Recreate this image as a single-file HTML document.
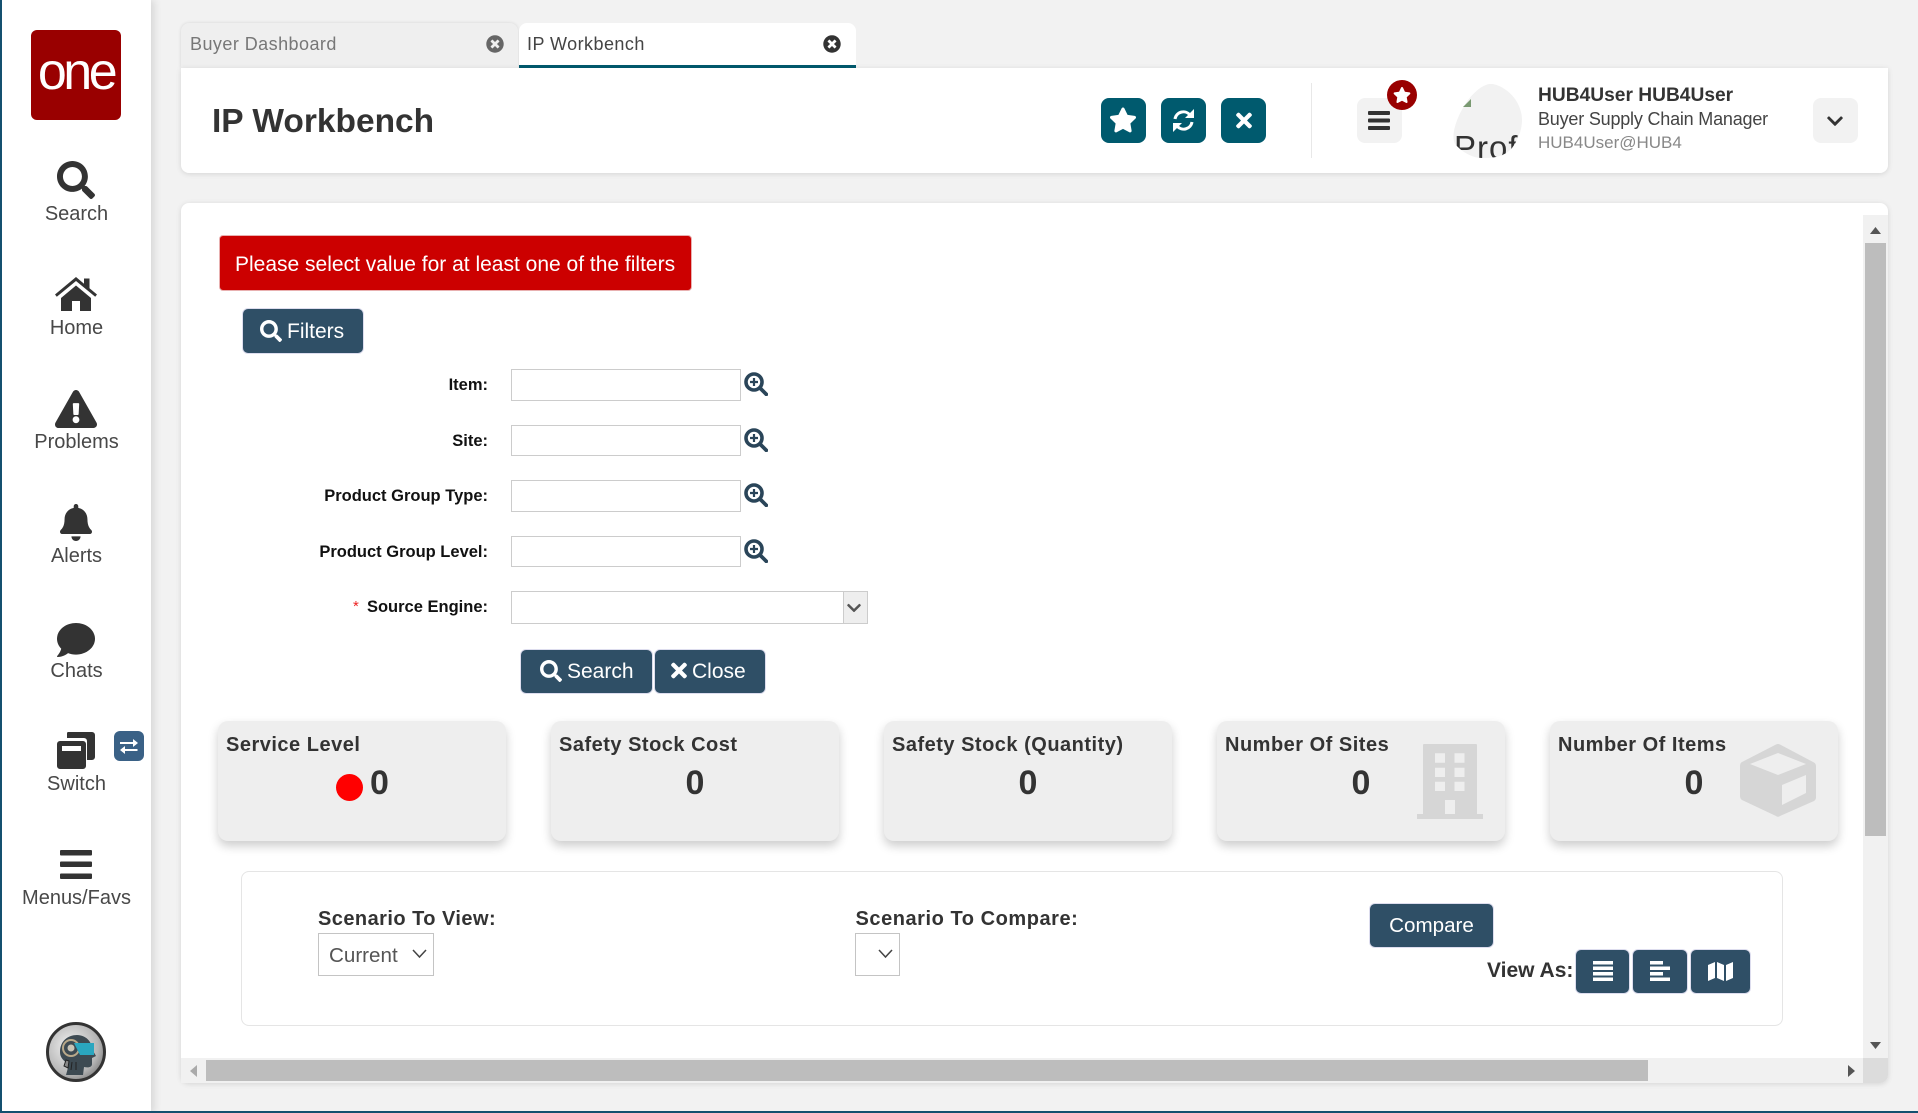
<!DOCTYPE html>
<html lang="en"><head><meta charset="utf-8"><title>IP Workbench</title>
<style>
*{box-sizing:border-box}
html,body{margin:0;padding:0;width:1918px;height:1113px;overflow:hidden;background:#f2f2f2;font-family:"Liberation Sans",sans-serif;color:#333}
.a{position:absolute}
.t{position:absolute;white-space:nowrap}
svg{position:absolute;display:block}
.nav{position:absolute;left:2px;width:149px;text-align:center;font-size:20px;color:#484848;line-height:24px}
.btn{position:absolute;background:#2f4f66;border:1px solid #dde;border-radius:6px;color:#fff;font-size:20px}
.tb{position:absolute;top:98px;width:45px;height:45px;border-radius:8px;background:#005a6e}
.inp{position:absolute;left:511px;width:230px;background:#fff;border:1px solid #ccc}
.lab{position:absolute;right:1430px;font-weight:bold;font-size:16.500px;color:#111;line-height:20px;white-space:nowrap}
.card{position:absolute;top:721px;width:288px;height:120px;background:#eee;border-radius:10px;box-shadow:0 5px 10px rgba(0,0,0,.2)}
.ct{position:absolute;left:8px;top:12px;font-size:20px;font-weight:bold;line-height:24px;color:#333;white-space:nowrap;letter-spacing:.5px}
.cv{position:absolute;left:0;width:100%;text-align:center;top:42px;font-size:34px;font-weight:bold;line-height:40px;color:#333}
</style></head><body>
<svg width="0" height="0" style="position:absolute"><defs>
<symbol id="s" viewBox="0 0 512 512"><path d="M505 442.7L405.3 343c-4.5-4.5-10.6-7-17-7H372c27.6-35.3 44-79.7 44-128C416 93.1 322.9 0 208 0S0 93.1 0 208s93.1 208 208 208c48.3 0 92.7-16.4 128-44v16.3c0 6.4 2.5 12.5 7 17l99.7 99.7c9.4 9.4 24.6 9.4 33.9 0l28.3-28.3c9.4-9.4 9.4-24.6.1-34zM208 336c-70.7 0-128-57.2-128-128 0-70.7 57.2-128 128-128 70.7 0 128 57.2 128 128 0 70.7-57.2 128-128 128z"/></symbol>
<symbol id="x" viewBox="0 0 352 512"><path d="M242.72 256l100.07-100.07c12.28-12.28 12.28-32.19 0-44.48l-22.24-22.24c-12.28-12.28-32.19-12.28-44.48 0L176 189.28 75.93 89.21c-12.28-12.28-32.19-12.28-44.48 0L9.21 111.45c-12.28 12.28-12.28 32.19 0 44.48L109.28 256 9.21 356.07c-12.28 12.28-12.28 32.19 0 44.48l22.24 22.24c12.28 12.28 32.2 12.28 44.48 0L176 322.72l100.07 100.07c12.28 12.28 32.2 12.28 44.48 0l22.24-22.24c12.28-12.28 12.28-32.19 0-44.48L242.72 256z"/></symbol>
<symbol id="st" viewBox="0 0 576 512"><path d="M259.3 17.8L194 150.2 47.9 171.5c-26.2 3.8-36.7 36.1-17.7 54.6l105.7 103-25 145.5c-4.5 26.3 23.2 46 46.4 33.7L288 439.6l130.7 68.7c23.2 12.2 50.9-7.4 46.4-33.7l-25-145.5 105.7-103c19-18.5 8.5-50.8-17.7-54.6L382 150.2 316.7 17.8c-11.7-23.6-45.6-23.9-57.4 0z"/></symbol>
<symbol id="tc" viewBox="0 0 512 512"><path d="M256 8C119 8 8 119 8 256s111 248 248 248 248-111 248-248S393 8 256 8zm121.6 313.1c4.7 4.7 4.7 12.3 0 17L338 377.6c-4.7 4.7-12.3 4.7-17 0L256 312l-65.1 65.6c-4.7 4.7-12.3 4.7-17 0L134.4 338c-4.7-4.7-4.7-12.3 0-17l65.6-65-65.6-65.1c-4.7-4.7-4.7-12.3 0-17l39.6-39.6c4.7-4.7 12.3-4.7 17 0l65 65.7 65.1-65.6c4.7-4.7 12.3-4.7 17 0l39.6 39.6c4.7 4.7 4.7 12.3 0 17L312 256l65.6 65.1z"/></symbol>
<symbol id="sp" viewBox="0 0 24 24"><circle cx="10" cy="10" r="8" fill="none" stroke="#2a4559" stroke-width="3.600"/><path d="M16 16l6.300 6.300" stroke="#2a4559" stroke-width="3.800" stroke-linecap="round"/><path d="M10 6v8M6 10h8" stroke="#2a4559" stroke-width="2.200"/></symbol>
</defs></svg>

<!-- sidebar -->
<div class="a" style="left:0;top:0;width:151px;height:1113px;background:#fff;box-shadow:3px 0 8px rgba(0,0,0,.12)"></div>
<div class="a" style="left:0;top:0;width:2px;height:1113px;background:#14506f"></div>
<div class="a" style="left:31px;top:30px;width:90px;height:90px;background:#990000;border-radius:6px"></div>
<div class="t" style="left:31px;top:30px;width:90px;height:90px;line-height:84px;text-align:center;color:#fff;font-size:52px;letter-spacing:-3.500px">one</div>

<svg style="left:57px;top:161px" width="38" height="38" fill="#333"><use href="#s"/></svg>
<div class="nav" style="top:202px">Search</div>
<svg style="left:55px;top:277px" width="42" height="34" viewBox="0 0 42 34" fill="#333"><path d="M21 0L0 17.500l1.800 2.300L21 4l19.200 15.800 1.800-2.300-7.500-6.200V1.500h-5.500v5.300zM6 21v13h11V24h8v10h11V21L21 8.500z"/></svg>
<div class="nav" style="top:316px">Home</div>
<svg style="left:55px;top:390px" width="42" height="38" viewBox="0 0 576 512" preserveAspectRatio="none" fill="#333"><path d="M569.517 440.013C587.975 472.007 564.806 512 527.94 512H48.054c-36.937 0-59.999-40.055-41.577-71.987L246.423 24.028c18.467-32.009 64.72-31.951 83.154 0l239.94 415.985zM288 354c-25.405 0-46 20.595-46 46s20.595 46 46 46 46-20.595 46-46-20.595-46-46-46zm-43.673-165.346l7.418 136c.347 6.364 5.609 11.346 11.982 11.346h48.546c6.373 0 11.635-4.982 11.982-11.346l7.418-136c.375-6.874-5.098-12.654-11.982-12.654h-63.383c-6.884 0-12.356 5.78-11.981 12.654z"/></svg>
<div class="nav" style="top:430px">Problems</div>
<svg style="left:60px;top:504px" width="32" height="37" viewBox="0 0 448 512" preserveAspectRatio="none" fill="#333"><path d="M224 512c35.32 0 63.97-28.65 63.97-64H160.03c0 35.35 28.65 64 63.97 64zm215.39-149.71c-19.32-20.76-55.47-51.99-55.47-154.29 0-77.7-54.48-139.9-127.94-155.16V32c0-17.67-14.32-32-31.98-32s-31.98 14.33-31.98 32v20.84C118.56 68.1 64.08 130.3 64.08 208c0 102.3-36.15 133.53-55.47 154.29-6 6.45-8.66 14.16-8.61 21.71.11 16.4 12.98 32 32.1 32h383.8c19.12 0 32-15.6 32.1-32 .05-7.55-2.61-15.27-8.61-21.71z"/></svg>
<div class="nav" style="top:544px">Alerts</div>
<svg style="left:57px;top:623px" width="38" height="34" viewBox="0 0 512 448" preserveAspectRatio="none" fill="#333"><path d="M256 0C114.6 0 0 93.100 0 208c0 49.600 21.400 95 57 130.700C44.500 389.100 2.700 434 2.200 434.500c-2.200 2.300-2.800 5.700-1.500 8.700S4.800 448 8 448c66.300 0 116-31.800 140.600-51.400 32.700 12.300 69 19.400 107.400 19.400 141.400 0 256-93.100 256-208S397.400 0 256 0z"/></svg>
<div class="nav" style="top:658.500px">Chats</div>
<svg style="left:57px;top:732px" width="38" height="37" viewBox="0 0 38 37" fill="#333"><path d="M11 0h24a3 3 0 0 1 3 3v22a3 3 0 0 1-3 3h-5V9a3 3 0 0 0-3-3H10V1.500C10 .5 10.500 0 11 0z"/><path d="M3 9h23a3 3 0 0 1 3 3v22a3 3 0 0 1-3 3H3a3 3 0 0 1-3-3V12a3 3 0 0 1 3-3zm2 5v5h19v-5z" fill-rule="evenodd"/></svg>
<div class="a" style="left:114px;top:731px;width:30px;height:30px;background:#3a6186;border-radius:6px"></div>
<svg style="left:120px;top:739px" width="18" height="15" viewBox="0 0 18 15" fill="none" stroke="#fff" stroke-width="2"><path d="M0 4h15M17.500 11H3"/><path d="M13 0l5 4-5 4zM5 7l-5 4 5 4z" fill="#fff" stroke="none"/></svg>
<div class="nav" style="top:772px">Switch</div>
<svg style="left:60px;top:850px" width="32" height="29" fill="#333"><rect width="32" height="5.500" rx="1"/><rect y="11.500" width="32" height="5.500" rx="1"/><rect y="23.500" width="32" height="5.500" rx="1"/></svg>
<div class="nav" style="top:886px">Menus/Favs</div>
<svg style="left:46px;top:1022px" width="60" height="60" viewBox="0 0 60 60">
<defs><radialGradient id="g" cx=".4" cy=".4" r=".7"><stop offset="0" stop-color="#f2f2f2"/><stop offset=".7" stop-color="#b5b5b5"/><stop offset="1" stop-color="#777"/></radialGradient></defs>
<circle cx="30" cy="30" r="28.500" fill="url(#g)" stroke="#333" stroke-width="3"/>
<path d="M14 30c0-11 8-17 17-17 9 0 15 7 15 14l4 7-4 2v6c0 3-3 4-8 3l-1 8H20l3-11c-6-3-9-7-9-12z" fill="#3d4a52"/>
<circle cx="25" cy="26" r="8" fill="none" stroke="#b9a98a" stroke-width="2"/><circle cx="25" cy="26" r="3.500" fill="#c9c4b6"/>
<path d="M28 21h20v12H34z" fill="#2aa6bf"/><path d="M18 44l2-6 3 1-1 7zM26 40l-1 8M30 40v8" stroke="#222" fill="#888"/>
</svg>

<!-- tabs -->
<div class="a" style="left:181px;top:23px;width:337px;height:45px;background:#efefef;border-radius:8px 8px 0 0;box-shadow:0 0 3px rgba(0,0,0,.12)"></div>
<div class="t" style="left:190px;top:32px;font-size:18px;line-height:24px;color:#777;letter-spacing:.45px">Buyer Dashboard</div>
<svg style="left:486px;top:35px" width="18" height="18" fill="#666"><use href="#tc"/></svg>
<div class="a" style="left:519px;top:23px;width:337px;height:45px;background:#fff;border-radius:8px 8px 0 0;border-bottom:3px solid #005a6e"></div>
<div class="t" style="left:527px;top:32px;font-size:18px;line-height:24px;color:#444;letter-spacing:.45px">IP Workbench</div>
<svg style="left:823px;top:35px" width="18" height="18" fill="#333"><use href="#tc"/></svg>

<!-- header -->
<div class="a" style="left:181px;top:68px;width:1707px;height:105px;background:#fff;border-radius:0 0 8px 8px;box-shadow:0 1px 6px rgba(0,0,0,.12)"></div>
<div class="t" style="left:212px;top:101px;font-size:33.500px;font-weight:bold;line-height:42px;color:#333">IP Workbench</div>
<div class="tb" style="left:1101px"></div><svg style="left:1109px;top:107px" width="28" height="26" fill="#fff"><use href="#st"/></svg>
<div class="tb" style="left:1161px"></div><svg style="left:1171px;top:108px" width="25" height="25" viewBox="0 0 25 25"><g fill="none" stroke="#fff" stroke-width="3"><path d="M4 11a8.500 8.500 0 0 1 15-4"/><path d="M21 14a8.500 8.500 0 0 1-15 4"/></g><path d="M23 1v9h-9zM2 24v-9h9z" fill="#fff"/></svg>
<div class="tb" style="left:1221px"></div><svg style="left:1235.500px;top:109px" width="16" height="23" fill="#fff"><use href="#x"/></svg>
<div class="a" style="left:1311px;top:83px;width:1px;height:75px;background:#e8e8e8"></div>
<div class="a" style="left:1357px;top:98px;width:45px;height:45px;border-radius:8px;background:#f2f2f2"></div>
<svg style="left:1368px;top:111px" width="22" height="19" fill="#333"><rect width="22" height="4" rx="1"/><rect y="7.500" width="22" height="4" rx="1"/><rect y="15" width="22" height="4" rx="1"/></svg>
<div class="a" style="left:1387px;top:80px;width:30px;height:30px;border-radius:50%;background:#990000"></div>
<svg style="left:1393px;top:87px" width="18" height="16" fill="#fff"><use href="#st"/></svg>
<div class="a" style="left:1452px;top:84px;width:70px;height:74px;overflow:hidden;background:#f2f2f2;clip-path:path('M41 0C58 4 70 20 70 36C70 46 66 56 60 64C52 73 42 74 30 74C20 74 10 68 3 60C-2 50 6 30 16 16C24 6 33 -1 41 0Z')"><div class="t" style="left:2px;top:45.500px;font-size:33px;line-height:36px;color:#333;letter-spacing:1px">Prof</div></div>
<svg style="left:1463px;top:99px" width="9" height="9"><path d="M8 0v8H0z" fill="#7a9a72"/></svg>
<div class="t" style="left:1538px;top:84px;font-size:19.200px;font-weight:bold;line-height:24px;color:#333">HUB4User HUB4User</div>
<div class="t" style="left:1538px;top:107px;font-size:18px;line-height:24px;color:#444;letter-spacing:-.2px">Buyer Supply Chain Manager</div>
<div class="t" style="left:1538px;top:131px;font-size:17px;line-height:24px;color:#888">HUB4User@HUB4</div>
<div class="a" style="left:1813px;top:98px;width:45px;height:45px;border-radius:8px;background:#f2f2f2"></div>
<svg style="left:1827px;top:112px" width="16" height="16" viewBox="0 0 448 448" fill="#333"><path d="M207.029 381.476L12.686 187.132c-9.373-9.373-9.373-24.569 0-33.941l22.667-22.667c9.357-9.357 24.522-9.375 33.901-.04L224 284.505l154.745-154.021c9.379-9.335 24.544-9.317 33.901.04l22.667 22.667c9.373 9.373 9.373 24.569 0 33.941L240.971 381.476c-9.373 9.372-24.569 9.372-33.942 0z"/></svg>

<!-- main card -->
<div class="a" style="left:181px;top:203px;width:1707px;height:880px;background:#fff;border-radius:8px;box-shadow:0 1px 6px rgba(0,0,0,.12)"></div>

<div class="a" style="left:219px;top:235px;width:473px;height:56px;background:#cc0000;border:1px solid #e8b0b0;border-radius:4px"></div>
<div class="t" style="left:235px;top:252.500px;font-size:21px;line-height:24px;color:#fff">Please select value for at least one of the filters</div>

<div class="btn" style="left:241.500px;top:308px;width:122.500px;height:46px"></div>
<svg style="left:260px;top:320px" width="22" height="22" fill="#fff"><use href="#s"/></svg>
<div class="t" style="left:287px;top:319.500px;font-size:21px;line-height:24px;color:#fff">Filters</div>

<div class="lab" style="top:375px;right:1430px">Item:</div>
<div class="inp" style="top:369px;height:32px"></div><svg style="left:744px;top:372px" width="24" height="24"><use href="#sp"/></svg>
<div class="lab" style="top:431px">Site:</div>
<div class="inp" style="top:425px;height:31px"></div><svg style="left:744px;top:428px" width="24" height="24"><use href="#sp"/></svg>
<div class="lab" style="top:486px">Product Group Type:</div>
<div class="inp" style="top:480px;height:32px"></div><svg style="left:744px;top:483px" width="24" height="24"><use href="#sp"/></svg>
<div class="lab" style="top:542px">Product Group Level:</div>
<div class="inp" style="top:536px;height:31px"></div><svg style="left:744px;top:539px" width="24" height="24"><use href="#sp"/></svg>
<div class="lab" style="top:597px">Source Engine:</div>
<div class="t" style="left:353px;top:597px;font-size:15px;line-height:20px;color:#e22">*</div>
<div class="inp" style="top:591px;height:33px;width:357px"></div>
<div class="a" style="left:843px;top:591px;width:25px;height:33px;background:#eee;border:1px solid #ccc"></div>
<svg style="left:847px;top:600px" width="14" height="14" viewBox="0 0 448 448" fill="#555"><path d="M207.029 381.476L12.686 187.132c-9.373-9.373-9.373-24.569 0-33.941l22.667-22.667c9.357-9.357 24.522-9.375 33.901-.04L224 284.505l154.745-154.021c9.379-9.335 24.544-9.317 33.901.04l22.667 22.667c9.373 9.373 9.373 24.569 0 33.941L240.971 381.476c-9.373 9.372-24.569 9.372-33.942 0z"/></svg>

<div class="btn" style="left:520px;top:649px;width:133px;height:45px"></div>
<svg style="left:540px;top:660px" width="22" height="22" fill="#fff"><use href="#s"/></svg>
<div class="t" style="left:567px;top:659.500px;font-size:21px;line-height:24px;color:#fff">Search</div>
<div class="btn" style="left:653.500px;top:649px;width:112.500px;height:45px"></div>
<svg style="left:671px;top:659px" width="16" height="23" fill="#fff"><use href="#x"/></svg>
<div class="t" style="left:692px;top:659.500px;font-size:21px;line-height:24px;color:#fff">Close</div>

<!-- KPI cards -->
<div class="card" style="left:218px"><div class="ct">Service Level</div>
<div class="a" style="left:118px;top:53px;width:27px;height:27px;border-radius:50%;background:#f00"></div>
<div class="t" style="left:152px;top:42px;font-size:34px;font-weight:bold;line-height:40px;color:#333">0</div></div>
<div class="card" style="left:551px"><div class="ct">Safety Stock Cost</div><div class="cv">0</div></div>
<div class="card" style="left:884px"><div class="ct">Safety Stock (Quantity)</div><div class="cv">0</div></div>
<div class="card" style="left:1217px"><div class="ct">Number Of Sites</div><div class="cv">0</div>
<svg style="left:200px;top:23px" width="66" height="75" viewBox="0 0 66 75" fill="#d6d6d6"><path fill-rule="evenodd" d="M6 1a1 1 0 0 1 1-1h52a1 1 0 0 1 1 1v69h6v5H0v-5h6zM18 9.300v9.400h10V9.300zM37.500 9.300v9.400h10V9.300zM18 23.700V33h10v-9.300zM37.500 23.700V33h10v-9.300zM18 37.700V47h10v-9.300zM37.500 37.700V47h10v-9.300zM28 56v14h10V56z"/></svg></div>
<div class="card" style="left:1550px"><div class="ct">Number Of Items</div><div class="cv">0</div>
<svg style="left:190px;top:23px" width="76" height="73" viewBox="0 0 76 73" fill="#d6d6d6"><path fill-rule="evenodd" d="M36 .5q2-1 4 0l34 18q2 1 2 4v31q0 2-2 3.500L40 72q-2 1.500-4 0L2 56q-2-1.500-2-4V22q0-3 2-4zM38 9L10 20l28 11 28-11zM66 31L42 41v20l24-12z"/></svg></div>

<!-- scenario panel -->
<div class="a" style="left:241px;top:871px;width:1542px;height:155px;background:#fff;border:1px solid #e5e5e5;border-radius:8px"></div>
<div class="t" style="left:318px;top:907px;font-size:20px;font-weight:bold;line-height:24px;color:#333;letter-spacing:.45px">Scenario To View:</div>
<div class="a" style="left:318px;top:933px;width:116px;height:43px;border:1px solid #c4c4c4;background:#fff"></div>
<div class="t" style="left:329px;top:943.500px;font-size:20.600px;line-height:24px;color:#555">Current</div>
<svg style="left:412px;top:949px" width="15" height="10" fill="none" stroke="#444" stroke-width="1.500"><path d="M1 1l6.500 7L14 1"/></svg>
<div class="t" style="left:855.500px;top:907px;font-size:20px;font-weight:bold;line-height:24px;color:#333;letter-spacing:.55px">Scenario To Compare:</div>
<div class="a" style="left:855px;top:933px;width:45px;height:43px;border:1px solid #c4c4c4;background:#fff"></div>
<svg style="left:878px;top:949px" width="15" height="10" fill="none" stroke="#444" stroke-width="1.500"><path d="M1 1l6.500 7L14 1"/></svg>

<div class="btn" style="left:1369px;top:903px;width:125px;height:45px"></div>
<div class="t" style="left:1369px;top:914px;width:125px;text-align:center;font-size:20.600px;line-height:24px;color:#fff">Compare</div>
<div class="t" style="left:1487px;top:958.500px;font-size:21px;font-weight:bold;line-height:24px;color:#333">View As:</div>
<div class="btn" style="left:1574.500px;top:949px;width:55.500px;height:45px"></div>
<svg style="left:1592.500px;top:961px" width="20" height="20" fill="#fff"><rect width="20" height="3.500"/><rect y="5.500" width="20" height="3.500"/><rect y="11" width="20" height="3.500"/><rect y="16.500" width="20" height="3.500"/></svg>
<div class="btn" style="left:1631.500px;top:949px;width:56.500px;height:45px"></div>
<svg style="left:1650px;top:961px" width="20" height="20" fill="#fff"><rect width="13" height="3.500"/><rect y="5.500" width="20" height="3.500"/><rect y="11" width="13" height="3.500"/><rect y="16.500" width="20" height="3.500"/></svg>
<div class="btn" style="left:1690px;top:949px;width:60.500px;height:45px"></div>
<svg style="left:1708px;top:962px" width="25" height="19" viewBox="0 0 25 19" fill="#fff"><path d="M0 3l7-3v16l-7 3zM9 0l7 3v16l-7-3zM18 3l7-3v16l-7 3z"/></svg>

<!-- scrollbars -->
<div class="a" style="left:1863px;top:215px;width:25px;height:843px;background:#f1f1f1"></div>
<div class="a" style="left:1865px;top:243px;width:21px;height:593px;background:#bdbdbd"></div>
<svg style="left:1870px;top:227px" width="11" height="7"><path d="M5.500 0L11 7H0z" fill="#555"/></svg>
<svg style="left:1870px;top:1042px" width="11" height="7"><path d="M5.500 7L11 0H0z" fill="#555"/></svg>
<div class="a" style="left:181px;top:1058px;width:1682px;height:25px;background:#f1f1f1"></div>
<div class="a" style="left:206px;top:1060px;width:1442px;height:21px;background:#bdbdbd"></div>
<svg style="left:190px;top:1065px" width="7" height="12"><path d="M0 6L7 0v12z" fill="#aaa"/></svg>
<svg style="left:1848px;top:1065px" width="7" height="12"><path d="M7 6L0 0v12z" fill="#555"/></svg>
<div class="a" style="left:1863px;top:1058px;width:25px;height:25px;background:#dcdcdc;border-radius:0 0 8px 0"></div>

<div class="a" style="left:0;top:1111px;width:1918px;height:2px;background:#14506f"></div>
</body></html>
